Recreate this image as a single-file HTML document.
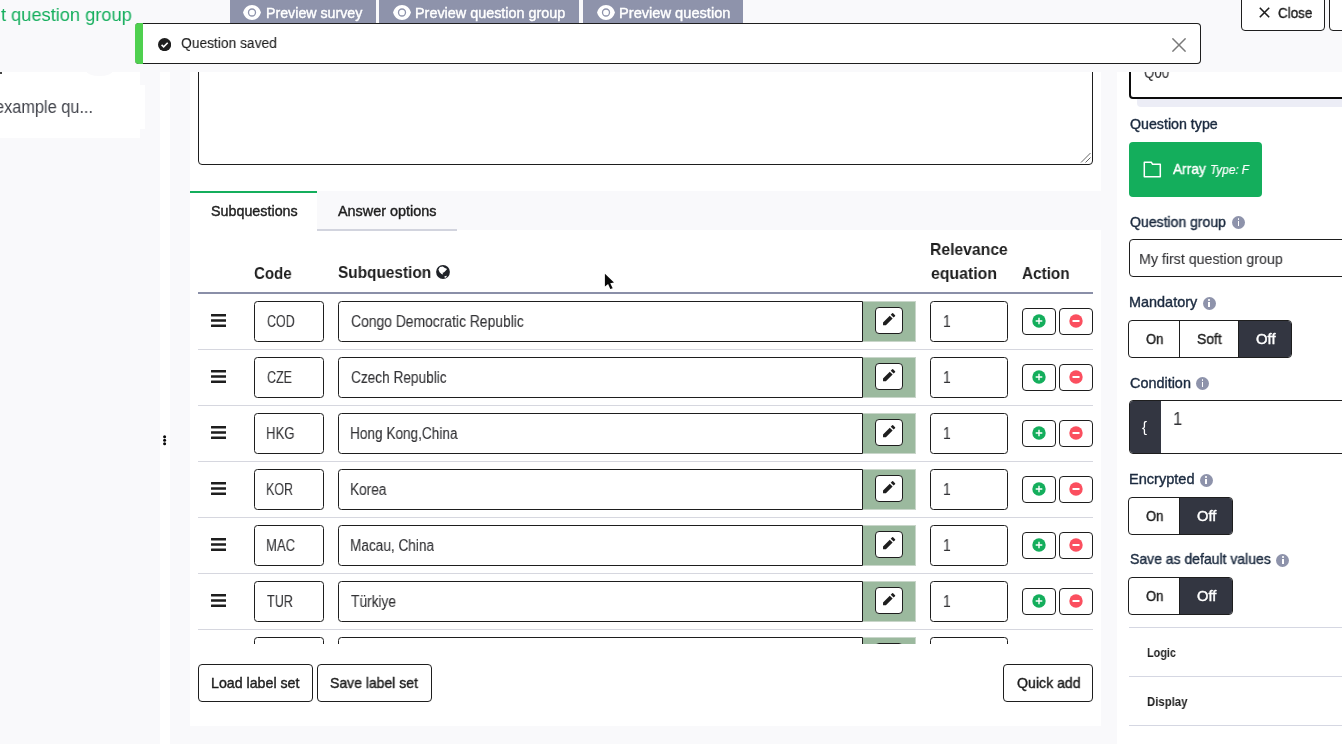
<!DOCTYPE html>
<html lang="en">
<head>
<meta charset="utf-8">
<title>Edit question</title>
<style>
*{box-sizing:border-box;margin:0;padding:0}
html,body{width:1342px;height:744px;overflow:hidden;background:#f9f9fb}
body{font-family:"Liberation Sans", sans-serif;color:#1e1e1e;position:relative;font-size:14px}
.abs{position:absolute}
.t{position:absolute;white-space:nowrap;line-height:1;transform-origin:0 0;will-change:transform}
.white{background:#fff}
.btn{position:absolute;background:#fff;border:1px solid #1e1e1e;border-radius:4px}
.inp{position:absolute;top:7px;background:#fff;border:1px solid #1e1e1e;border-radius:3.500px;height:41px}
.row{position:absolute;left:198px;width:895px;height:56px;border-bottom:1px solid #d6d7df}
.bars{position:absolute;left:12.700px;top:19.800px;width:15.600px;height:13px}
.addon{position:absolute;left:665px;top:7px;width:53px;height:41px;background:#9bb99e;border:1px solid #c9d6ca;border-left:0}
.pen{position:absolute;left:677px;top:13px;width:28px;height:27px;background:#fff;border:1px solid #1e1e1e;border-radius:4px}
.pen svg{position:absolute;left:4.900px;top:3.200px}
.act{position:absolute;top:14px;width:34px;height:27px;background:#fff;border:1px solid #1e1e1e;border-radius:4px}
.act svg{position:absolute;left:7.500px;top:4.100px}
.info{position:absolute;width:13px;height:13px;border-radius:50%;background:#8e93ab}
.info:before{content:"";position:absolute;left:5.700px;top:2.800px;width:1.600px;height:1.600px;background:#fff;border-radius:50%}
.info:after{content:"";position:absolute;left:5.700px;top:5.400px;width:1.600px;height:4.700px;background:#fff}
.bg{position:absolute;left:1128px;height:38px;border:1px solid #1e1e1e;border-radius:4px;background:#fff;overflow:hidden}
.bg b{position:absolute;top:0;bottom:0}
.bg b.on{background:#333641}
.bg b+b{border-left:1px solid #1e1e1e}
.hr{position:absolute;left:1129px;width:220px;height:1px;background:#d5d7e2}
</style>
</head>
<body>
<div class="abs white" style="left:0;top:72px;width:140px;height:65.700px"></div>
<div class="abs white" style="left:0;top:85px;width:145px;height:43.700px"></div>
<div class="abs white" style="left:160px;top:72px;width:10.400px;height:672px"></div>
<div class="abs" style="left:86px;top:65px;width:27px;height:11px;border-radius:50%;background:#f9f9fb"></div>
<div class="abs" style="left:0;top:72px;width:1.500px;height:2px;background:#444"></div>
<svg class="abs" style="left:160px;top:432px" width="10" height="16" viewBox="0 0 10 16"><circle cx="4.600" cy="4.800" r="1.500" fill="#0a0a0a"/><circle cx="4.600" cy="8.300" r="1.500" fill="#0a0a0a"/><circle cx="4.600" cy="11.800" r="1.500" fill="#0a0a0a"/></svg>
<div class="t" id="sb-item" style="left:-5.20px;top:98.69px;font-size:17.5px;color:#42444c;transform:scaleX(0.9328)">example qu...</div>
<div class="abs white" style="left:190px;top:72px;width:911px;height:119px"></div>
<div class="abs white" style="left:190px;top:230px;width:911px;height:495.700px"></div>
<div class="abs" style="left:198px;top:30px;width:895px;height:135px;border:1px solid #1e1e1e;border-radius:4px;background:#fff"></div>
<svg class="abs" style="left:1080px;top:152px" width="11" height="11" viewBox="0 0 11 11"><path d="M10.500 1L1 10.500M10.500 5.500L5.500 10.500" stroke="#666" stroke-width="1" fill="none"/></svg>
<div class="abs white" style="left:190px;top:190.600px;width:127.200px;height:40px;border-top:2.300px solid #14ae5c"></div>
<div class="abs" style="left:317.200px;top:229px;width:139.800px;height:2px;background:#d2d4de"></div>
<div class="t" id="tab1" style="left:210.50px;top:203.58px;font-size:14.2px;color:#1e1e1e;transform:scaleX(1.0083);-webkit-text-stroke:0.4px #1e1e1e">Subquestions</div>
<div class="t" id="tab2" style="left:338.20px;top:203.58px;font-size:14.2px;color:#1e1e1e;transform:scaleX(1.0154);-webkit-text-stroke:0.4px #1e1e1e">Answer options</div>
<div class="t" id="th-code" style="left:254.00px;top:265.55px;font-size:16.6px;color:#1e1e1e;transform:scaleX(0.9090);font-weight:700">Code</div>
<div class="t" id="th-sub" style="left:338.20px;top:264.95px;font-size:16.6px;color:#1e1e1e;transform:scaleX(0.9278);font-weight:700">Subquestion</div>
<svg class="abs" style="left:435.700px;top:265.100px" width="14" height="14" viewBox="0 0 14 14"><circle cx="7" cy="7" r="6.900" fill="#1f2228"/><path d="M2.400 4.600L3.900 2.100l2.900-.5 1.700 1.200 2.600 1.300-1.700 1.900-1.600 1.600-1.300.2.700 1.600-1.700-.3-1.900-1.900zM8.500 11.200l2.600-.5-1.300 2-1.300-.2z" fill="#fff"/></svg>
<div class="t" id="th-rel1" style="left:929.65px;top:241.95px;font-size:16.6px;color:#1e1e1e;transform:scaleX(0.9472);font-weight:700">Relevance</div>
<div class="t" id="th-rel2" style="left:930.60px;top:265.75px;font-size:16.6px;color:#1e1e1e;transform:scaleX(0.9550);font-weight:700">equation</div>
<div class="t" id="th-act" style="left:1022.30px;top:265.75px;font-size:16.6px;color:#1e1e1e;transform:scaleX(0.9226);font-weight:700">Action</div>
<div class="abs" style="left:198px;top:292px;width:895px;height:2px;background:#8a8fa8"></div>
<div class="abs" id="rows" style="left:0;top:294px;width:1342px;height:349.600px;overflow:hidden">
<div class="row" style="top:0px">
<svg class="bars" width="15.600" height="13" viewBox="0 0 15.600 13"><rect x="0" y="0" width="15.600" height="2.400" rx=".3" fill="#1e1e1e"/><rect x="0" y="5.300" width="15.600" height="2.400" rx=".3" fill="#1e1e1e"/><rect x="0" y="10.600" width="15.600" height="2.400" rx=".3" fill="#1e1e1e"/></svg>
<div class="inp" style="left:56px;width:70px"></div>
<div class="inp" style="left:140px;width:525px;border-radius:3.500px 0 0 3.500px"></div>
<div class="addon"></div><div class="pen"><svg width="16.300" height="16.300" viewBox="0 0 24 24"><path d="M12.900 6.858l4.242 4.243L7.242 21H3v-4.243l9.900-9.900zm1.414-1.414l2.121-2.122a1 1 0 0 1 1.414 0l2.829 2.829a1 1 0 0 1 0 1.414l-2.122 2.121-4.242-4.242z" fill="#1e1e1e"/></svg></div>
<div class="inp" style="left:732px;width:78px"></div>
<div class="act" style="left:824px"><svg width="16" height="16" viewBox="0 0 16 16"><circle cx="8" cy="8" r="6.700" fill="#14ae5c"/><path d="M8 4.700v6.600M4.700 8h6.600" stroke="#fff" stroke-width="1.400" fill="none"/></svg></div><div class="act" style="left:861px"><svg width="16" height="16" viewBox="0 0 16 16"><circle cx="8" cy="8" r="6.700" fill="#fb4f5f"/><path d="M4.500 8h7" stroke="#fff" stroke-width="2" fill="none"/></svg></div>
</div>
<div class="t" id="c0" style="left:267.00px;top:19.63px;font-size:15.8px;color:#333336;transform:scaleX(0.7868);-webkit-text-stroke:0.1px #333336">COD</div>
<div class="t" id="n0" style="left:350.80px;top:19.63px;font-size:15.8px;color:#333336;transform:scaleX(0.8787);-webkit-text-stroke:0.1px #333336">Congo Democratic Republic</div>
<div class="t" id="r0" style="left:942.92px;top:19.63px;font-size:15.8px;color:#333336;transform:scaleX(0.8750);-webkit-text-stroke:0.1px #333336">1</div>
<div class="row" style="top:56px">
<svg class="bars" width="15.600" height="13" viewBox="0 0 15.600 13"><rect x="0" y="0" width="15.600" height="2.400" rx=".3" fill="#1e1e1e"/><rect x="0" y="5.300" width="15.600" height="2.400" rx=".3" fill="#1e1e1e"/><rect x="0" y="10.600" width="15.600" height="2.400" rx=".3" fill="#1e1e1e"/></svg>
<div class="inp" style="left:56px;width:70px"></div>
<div class="inp" style="left:140px;width:525px;border-radius:3.500px 0 0 3.500px"></div>
<div class="addon"></div><div class="pen"><svg width="16.300" height="16.300" viewBox="0 0 24 24"><path d="M12.900 6.858l4.242 4.243L7.242 21H3v-4.243l9.900-9.900zm1.414-1.414l2.121-2.122a1 1 0 0 1 1.414 0l2.829 2.829a1 1 0 0 1 0 1.414l-2.122 2.121-4.242-4.242z" fill="#1e1e1e"/></svg></div>
<div class="inp" style="left:732px;width:78px"></div>
<div class="act" style="left:824px"><svg width="16" height="16" viewBox="0 0 16 16"><circle cx="8" cy="8" r="6.700" fill="#14ae5c"/><path d="M8 4.700v6.600M4.700 8h6.600" stroke="#fff" stroke-width="1.400" fill="none"/></svg></div><div class="act" style="left:861px"><svg width="16" height="16" viewBox="0 0 16 16"><circle cx="8" cy="8" r="6.700" fill="#fb4f5f"/><path d="M4.500 8h7" stroke="#fff" stroke-width="2" fill="none"/></svg></div>
</div>
<div class="t" id="c1" style="left:267.00px;top:75.63px;font-size:15.8px;color:#333336;transform:scaleX(0.7889);-webkit-text-stroke:0.1px #333336">CZE</div>
<div class="t" id="n1" style="left:350.80px;top:75.63px;font-size:15.8px;color:#333336;transform:scaleX(0.8642);-webkit-text-stroke:0.1px #333336">Czech Republic</div>
<div class="t" id="r1" style="left:942.92px;top:75.63px;font-size:15.8px;color:#333336;transform:scaleX(0.8750);-webkit-text-stroke:0.1px #333336">1</div>
<div class="row" style="top:112px">
<svg class="bars" width="15.600" height="13" viewBox="0 0 15.600 13"><rect x="0" y="0" width="15.600" height="2.400" rx=".3" fill="#1e1e1e"/><rect x="0" y="5.300" width="15.600" height="2.400" rx=".3" fill="#1e1e1e"/><rect x="0" y="10.600" width="15.600" height="2.400" rx=".3" fill="#1e1e1e"/></svg>
<div class="inp" style="left:56px;width:70px"></div>
<div class="inp" style="left:140px;width:525px;border-radius:3.500px 0 0 3.500px"></div>
<div class="addon"></div><div class="pen"><svg width="16.300" height="16.300" viewBox="0 0 24 24"><path d="M12.900 6.858l4.242 4.243L7.242 21H3v-4.243l9.900-9.900zm1.414-1.414l2.121-2.122a1 1 0 0 1 1.414 0l2.829 2.829a1 1 0 0 1 0 1.414l-2.122 2.121-4.242-4.242z" fill="#1e1e1e"/></svg></div>
<div class="inp" style="left:732px;width:78px"></div>
<div class="act" style="left:824px"><svg width="16" height="16" viewBox="0 0 16 16"><circle cx="8" cy="8" r="6.700" fill="#14ae5c"/><path d="M8 4.700v6.600M4.700 8h6.600" stroke="#fff" stroke-width="1.400" fill="none"/></svg></div><div class="act" style="left:861px"><svg width="16" height="16" viewBox="0 0 16 16"><circle cx="8" cy="8" r="6.700" fill="#fb4f5f"/><path d="M4.500 8h7" stroke="#fff" stroke-width="2" fill="none"/></svg></div>
</div>
<div class="t" id="c2" style="left:266.17px;top:131.63px;font-size:15.8px;color:#333336;transform:scaleX(0.8317);-webkit-text-stroke:0.1px #333336">HKG</div>
<div class="t" id="n2" style="left:349.94px;top:131.63px;font-size:15.8px;color:#333336;transform:scaleX(0.8618);-webkit-text-stroke:0.1px #333336">Hong Kong,China</div>
<div class="t" id="r2" style="left:942.92px;top:131.63px;font-size:15.8px;color:#333336;transform:scaleX(0.8750);-webkit-text-stroke:0.1px #333336">1</div>
<div class="row" style="top:168px">
<svg class="bars" width="15.600" height="13" viewBox="0 0 15.600 13"><rect x="0" y="0" width="15.600" height="2.400" rx=".3" fill="#1e1e1e"/><rect x="0" y="5.300" width="15.600" height="2.400" rx=".3" fill="#1e1e1e"/><rect x="0" y="10.600" width="15.600" height="2.400" rx=".3" fill="#1e1e1e"/></svg>
<div class="inp" style="left:56px;width:70px"></div>
<div class="inp" style="left:140px;width:525px;border-radius:3.500px 0 0 3.500px"></div>
<div class="addon"></div><div class="pen"><svg width="16.300" height="16.300" viewBox="0 0 24 24"><path d="M12.900 6.858l4.242 4.243L7.242 21H3v-4.243l9.900-9.900zm1.414-1.414l2.121-2.122a1 1 0 0 1 1.414 0l2.829 2.829a1 1 0 0 1 0 1.414l-2.122 2.121-4.242-4.242z" fill="#1e1e1e"/></svg></div>
<div class="inp" style="left:732px;width:78px"></div>
<div class="act" style="left:824px"><svg width="16" height="16" viewBox="0 0 16 16"><circle cx="8" cy="8" r="6.700" fill="#14ae5c"/><path d="M8 4.700v6.600M4.700 8h6.600" stroke="#fff" stroke-width="1.400" fill="none"/></svg></div><div class="act" style="left:861px"><svg width="16" height="16" viewBox="0 0 16 16"><circle cx="8" cy="8" r="6.700" fill="#fb4f5f"/><path d="M4.500 8h7" stroke="#fff" stroke-width="2" fill="none"/></svg></div>
</div>
<div class="t" id="c3" style="left:266.21px;top:187.63px;font-size:15.8px;color:#333336;transform:scaleX(0.7921);-webkit-text-stroke:0.1px #333336">KOR</div>
<div class="t" id="n3" style="left:349.93px;top:187.63px;font-size:15.8px;color:#333336;transform:scaleX(0.8654);-webkit-text-stroke:0.1px #333336">Korea</div>
<div class="t" id="r3" style="left:942.92px;top:187.63px;font-size:15.8px;color:#333336;transform:scaleX(0.8750);-webkit-text-stroke:0.1px #333336">1</div>
<div class="row" style="top:224px">
<svg class="bars" width="15.600" height="13" viewBox="0 0 15.600 13"><rect x="0" y="0" width="15.600" height="2.400" rx=".3" fill="#1e1e1e"/><rect x="0" y="5.300" width="15.600" height="2.400" rx=".3" fill="#1e1e1e"/><rect x="0" y="10.600" width="15.600" height="2.400" rx=".3" fill="#1e1e1e"/></svg>
<div class="inp" style="left:56px;width:70px"></div>
<div class="inp" style="left:140px;width:525px;border-radius:3.500px 0 0 3.500px"></div>
<div class="addon"></div><div class="pen"><svg width="16.300" height="16.300" viewBox="0 0 24 24"><path d="M12.900 6.858l4.242 4.243L7.242 21H3v-4.243l9.900-9.900zm1.414-1.414l2.121-2.122a1 1 0 0 1 1.414 0l2.829 2.829a1 1 0 0 1 0 1.414l-2.122 2.121-4.242-4.242z" fill="#1e1e1e"/></svg></div>
<div class="inp" style="left:732px;width:78px"></div>
<div class="act" style="left:824px"><svg width="16" height="16" viewBox="0 0 16 16"><circle cx="8" cy="8" r="6.700" fill="#14ae5c"/><path d="M8 4.700v6.600M4.700 8h6.600" stroke="#fff" stroke-width="1.400" fill="none"/></svg></div><div class="act" style="left:861px"><svg width="16" height="16" viewBox="0 0 16 16"><circle cx="8" cy="8" r="6.700" fill="#fb4f5f"/><path d="M4.500 8h7" stroke="#fff" stroke-width="2" fill="none"/></svg></div>
</div>
<div class="t" id="c4" style="left:266.17px;top:243.63px;font-size:15.8px;color:#333336;transform:scaleX(0.8280);-webkit-text-stroke:0.1px #333336">MAC</div>
<div class="t" id="n4" style="left:349.94px;top:243.63px;font-size:15.8px;color:#333336;transform:scaleX(0.8616);-webkit-text-stroke:0.1px #333336">Macau, China</div>
<div class="t" id="r4" style="left:942.92px;top:243.63px;font-size:15.8px;color:#333336;transform:scaleX(0.8750);-webkit-text-stroke:0.1px #333336">1</div>
<div class="row" style="top:280px">
<svg class="bars" width="15.600" height="13" viewBox="0 0 15.600 13"><rect x="0" y="0" width="15.600" height="2.400" rx=".3" fill="#1e1e1e"/><rect x="0" y="5.300" width="15.600" height="2.400" rx=".3" fill="#1e1e1e"/><rect x="0" y="10.600" width="15.600" height="2.400" rx=".3" fill="#1e1e1e"/></svg>
<div class="inp" style="left:56px;width:70px"></div>
<div class="inp" style="left:140px;width:525px;border-radius:3.500px 0 0 3.500px"></div>
<div class="addon"></div><div class="pen"><svg width="16.300" height="16.300" viewBox="0 0 24 24"><path d="M12.900 6.858l4.242 4.243L7.242 21H3v-4.243l9.900-9.900zm1.414-1.414l2.121-2.122a1 1 0 0 1 1.414 0l2.829 2.829a1 1 0 0 1 0 1.414l-2.122 2.121-4.242-4.242z" fill="#1e1e1e"/></svg></div>
<div class="inp" style="left:732px;width:78px"></div>
<div class="act" style="left:824px"><svg width="16" height="16" viewBox="0 0 16 16"><circle cx="8" cy="8" r="6.700" fill="#14ae5c"/><path d="M8 4.700v6.600M4.700 8h6.600" stroke="#fff" stroke-width="1.400" fill="none"/></svg></div><div class="act" style="left:861px"><svg width="16" height="16" viewBox="0 0 16 16"><circle cx="8" cy="8" r="6.700" fill="#fb4f5f"/><path d="M4.500 8h7" stroke="#fff" stroke-width="2" fill="none"/></svg></div>
</div>
<div class="t" id="c5" style="left:267.00px;top:299.63px;font-size:15.8px;color:#333336;transform:scaleX(0.7986);-webkit-text-stroke:0.1px #333336">TUR</div>
<div class="t" id="n5" style="left:350.80px;top:299.63px;font-size:15.8px;color:#333336;transform:scaleX(0.8692);-webkit-text-stroke:0.1px #333336">Türkiye</div>
<div class="t" id="r5" style="left:942.92px;top:299.63px;font-size:15.8px;color:#333336;transform:scaleX(0.8750);-webkit-text-stroke:0.1px #333336">1</div>
<div class="row" style="top:336px">
<svg class="bars" width="15.600" height="13" viewBox="0 0 15.600 13"><rect x="0" y="0" width="15.600" height="2.400" rx=".3" fill="#1e1e1e"/><rect x="0" y="5.300" width="15.600" height="2.400" rx=".3" fill="#1e1e1e"/><rect x="0" y="10.600" width="15.600" height="2.400" rx=".3" fill="#1e1e1e"/></svg>
<div class="inp" style="left:56px;width:70px"></div>
<div class="inp" style="left:140px;width:525px;border-radius:3.500px 0 0 3.500px"></div>
<div class="addon"></div><div class="pen"><svg width="16.300" height="16.300" viewBox="0 0 24 24"><path d="M12.900 6.858l4.242 4.243L7.242 21H3v-4.243l9.900-9.900zm1.414-1.414l2.121-2.122a1 1 0 0 1 1.414 0l2.829 2.829a1 1 0 0 1 0 1.414l-2.122 2.121-4.242-4.242z" fill="#1e1e1e"/></svg></div>
<div class="inp" style="left:732px;width:78px"></div>
<div class="act" style="left:824px"><svg width="16" height="16" viewBox="0 0 16 16"><circle cx="8" cy="8" r="6.700" fill="#14ae5c"/><path d="M8 4.700v6.600M4.700 8h6.600" stroke="#fff" stroke-width="1.400" fill="none"/></svg></div><div class="act" style="left:861px"><svg width="16" height="16" viewBox="0 0 16 16"><circle cx="8" cy="8" r="6.700" fill="#fb4f5f"/><path d="M4.500 8h7" stroke="#fff" stroke-width="2" fill="none"/></svg></div>
</div>
</div>
<div class="btn" style="left:198px;top:664px;width:115px;height:38px"></div>
<div class="btn" style="left:317px;top:664px;width:115px;height:38px"></div>
<div class="btn" style="left:1003px;top:664px;width:90px;height:38px"></div>
<div class="t" id="b-load" style="left:211.00px;top:676.08px;font-size:14.2px;color:#1e1e1e;transform:scaleX(1.0011);-webkit-text-stroke:0.4px #1e1e1e">Load label set</div>
<div class="t" id="b-save" style="left:330.30px;top:676.08px;font-size:14.2px;color:#1e1e1e;transform:scaleX(0.9856);-webkit-text-stroke:0.4px #1e1e1e">Save label set</div>
<div class="t" id="b-quick" style="left:1016.90px;top:675.88px;font-size:14.2px;color:#1e1e1e;transform:scaleX(0.9954);-webkit-text-stroke:0.4px #1e1e1e">Quick add</div>
<div class="abs white" style="left:1117px;top:72px;width:225px;height:672px"></div>
<div class="abs" style="left:1137px;top:90px;width:210px;height:17px;background:#ecedf6;border-radius:4px"></div>
<div class="abs" style="left:1129px;top:30px;width:230px;height:69px;border:2px solid #0c0c0c;border-radius:4px;background:#fff"></div>
<div class="t" id="q00" style="left:1144.00px;top:65.13px;font-size:15.8px;color:#333336;transform:scaleX(0.8446);-webkit-text-stroke:0.1px #333336">Q00</div>
<div class="t" id="l-qt" style="left:1130.30px;top:117.08px;font-size:14.2px;color:#1b2a3f;transform:scaleX(1.0017);-webkit-text-stroke:0.38px #1b2a3f">Question type</div>
<div class="abs" style="left:1129px;top:142px;width:133px;height:55px;border-radius:4px;background:#14ae5c"></div>
<svg class="abs" style="left:1143px;top:161px" width="19" height="17" viewBox="0 0 19 17"><path d="M1.300 1.200h7l1.300 2.100h7.700v12.400h-16z" fill="none" stroke="#fff" stroke-width="1.500" stroke-linejoin="round"/></svg>
<div class="t" id="arr" style="left:1172.90px;top:161.71px;font-size:14.4px;color:#fff;transform:scaleX(0.9521);-webkit-text-stroke:0.4px #fff">Array</div>
<div class="t" id="typf" style="left:1209.78px;top:163.76px;font-size:12.8px;color:#fff;transform:scaleX(0.9200);font-style:italic;-webkit-text-stroke:0.2px #fff">Type: F</div>
<div class="t" id="l-qg" style="left:1130.30px;top:214.98px;font-size:14.2px;color:#1b2a3f;transform:scaleX(0.9895);-webkit-text-stroke:0.38px #1b2a3f">Question group</div>
<div class="info" style="left:1232.2px;top:215.7px"></div>
<div class="abs" style="left:1129px;top:239px;width:230px;height:38px;border:1px solid #1e1e1e;border-radius:4px;background:#fff"></div>
<div class="t" id="sel" style="left:1139.26px;top:251.33px;font-size:15.2px;color:#333336;transform:scaleX(0.9357);-webkit-text-stroke:0.1px #333336">My first question group</div>
<div class="t" id="l-man" style="left:1129.28px;top:294.98px;font-size:14.2px;color:#1b2a3f;transform:scaleX(1.0174);-webkit-text-stroke:0.38px #1b2a3f">Mandatory</div>
<div class="info" style="left:1202.8px;top:296.7px"></div>
<div class="bg" style="top:320px;width:164px"><b style="left:0;width:51px"></b><b style="left:50px;width:60px"></b><b class="on" style="left:109px;width:54px"></b></div>
<div class="t" id="m-on" style="left:1146.10px;top:331.78px;font-size:14.2px;color:#1e1e1e;transform:scaleX(0.9204);-webkit-text-stroke:0.4px #1e1e1e">On</div>
<div class="t" id="m-soft" style="left:1196.90px;top:331.78px;font-size:14.2px;color:#1e1e1e;transform:scaleX(0.9804);-webkit-text-stroke:0.4px #1e1e1e">Soft</div>
<div class="t" id="m-off" style="left:1255.60px;top:331.78px;font-size:14.2px;color:#fff;transform:scaleX(1.0470);-webkit-text-stroke:0.4px #fff">Off</div>
<div class="t" id="l-con" style="left:1130.30px;top:375.78px;font-size:14.2px;color:#1b2a3f;transform:scaleX(1.0160);-webkit-text-stroke:0.38px #1b2a3f">Condition</div>
<div class="info" style="left:1195.9px;top:376.7px"></div>
<div class="abs" style="left:1129px;top:400px;width:230px;height:54px;border:1px solid #1e1e1e;border-radius:4px;background:#fff;overflow:hidden"><div class="abs" style="left:0;top:0;width:31px;height:54px;background:#333641"></div></div>
<div class="t" id="brace" style="left:1142.30px;top:419.10px;font-size:15px;color:#fff;transform:scaleX(1.0000)">{</div>
<div class="t" id="con1" style="left:1172.58px;top:409.66px;font-size:18px;color:#333336;transform:scaleX(0.9222);font-family:"Liberation Mono", monospace">1</div>
<div class="t" id="l-enc" style="left:1129.27px;top:471.68px;font-size:14.2px;color:#1b2a3f;transform:scaleX(1.0260);-webkit-text-stroke:0.38px #1b2a3f">Encrypted</div>
<div class="info" style="left:1199.7px;top:473.5px"></div>
<div class="bg" style="top:497px;width:105px"><b style="left:0;width:51px"></b><b class="on" style="left:50px;width:54px"></b></div>
<div class="t" id="e-on" style="left:1146.10px;top:508.78px;font-size:14.2px;color:#1e1e1e;transform:scaleX(0.9204);-webkit-text-stroke:0.4px #1e1e1e">On</div>
<div class="t" id="e-off" style="left:1196.60px;top:508.78px;font-size:14.2px;color:#fff;transform:scaleX(1.0363);-webkit-text-stroke:0.4px #fff">Off</div>
<div class="t" id="l-sav" style="left:1130.30px;top:552.48px;font-size:14.2px;color:#1b2a3f;transform:scaleX(0.9863);-webkit-text-stroke:0.38px #1b2a3f">Save as default values</div>
<div class="info" style="left:1276.3px;top:553.7px"></div>
<div class="bg" style="top:577px;width:105px"><b style="left:0;width:51px"></b><b class="on" style="left:50px;width:54px"></b></div>
<div class="t" id="s-on" style="left:1146.10px;top:588.78px;font-size:14.2px;color:#1e1e1e;transform:scaleX(0.9204);-webkit-text-stroke:0.4px #1e1e1e">On</div>
<div class="t" id="s-off" style="left:1196.60px;top:588.78px;font-size:14.2px;color:#fff;transform:scaleX(1.0363);-webkit-text-stroke:0.4px #fff">Off</div>
<div class="hr" style="top:627px"></div><div class="hr" style="top:676px"></div><div class="hr" style="top:725px"></div>
<div class="t" id="a-log" style="left:1146.60px;top:646.96px;font-size:12.8px;color:#1e1e1e;transform:scaleX(0.8469);font-weight:700">Logic</div>
<div class="t" id="a-dis" style="left:1146.60px;top:696.06px;font-size:12.8px;color:#1e1e1e;transform:scaleX(0.8879);font-weight:700">Display</div>
<div class="abs" style="left:0;top:0;width:1342px;height:72px;background:#f9f9fb"></div>
<div class="t" id="sb-title" style="left:1.10px;top:4.62px;font-size:19px;color:#14ae5c;transform:scaleX(0.9595)">t question group</div>
<div class="abs" style="left:230.2px;top:0;width:145.7px;height:22.800px;background:#8e93ab"></div>
<div class="abs" style="left:379px;top:0;width:199.8px;height:22.800px;background:#8e93ab"></div>
<div class="abs" style="left:583.2px;top:0;width:159.6px;height:22.800px;background:#8e93ab"></div>
<svg class="abs" style="left:243.1px;top:4.5px" width="18" height="15" viewBox="0 0 18 15"><path d="M.1 7.500C1.100 3.100 4.700 0 9 0s7.900 3.100 8.900 7.500C16.900 11.900 13.300 15 9 15S1.100 11.900.1 7.500z" fill="#fff"/><circle cx="9" cy="7.500" r="3.500" fill="none" stroke="#8e93ab" stroke-width="1.300"/></svg>
<svg class="abs" style="left:393px;top:4.5px" width="18" height="15" viewBox="0 0 18 15"><path d="M.1 7.500C1.100 3.100 4.700 0 9 0s7.900 3.100 8.900 7.500C16.900 11.900 13.300 15 9 15S1.100 11.900.1 7.500z" fill="#fff"/><circle cx="9" cy="7.500" r="3.500" fill="none" stroke="#8e93ab" stroke-width="1.300"/></svg>
<svg class="abs" style="left:596.9px;top:4.5px" width="18" height="15" viewBox="0 0 18 15"><path d="M.1 7.500C1.100 3.100 4.700 0 9 0s7.900 3.100 8.900 7.500C16.900 11.900 13.300 15 9 15S1.100 11.900.1 7.500z" fill="#fff"/><circle cx="9" cy="7.500" r="3.500" fill="none" stroke="#8e93ab" stroke-width="1.300"/></svg>
<div class="t" id="pv1" style="left:265.90px;top:5.88px;font-size:14.2px;color:#fff;transform:scaleX(1.0021);-webkit-text-stroke:0.4px #fff">Preview survey</div>
<div class="t" id="pv2" style="left:415.29px;top:5.88px;font-size:14.2px;color:#fff;transform:scaleX(1.0137);-webkit-text-stroke:0.4px #fff">Preview question group</div>
<div class="t" id="pv3" style="left:618.57px;top:5.88px;font-size:14.2px;color:#fff;transform:scaleX(1.0316);-webkit-text-stroke:0.4px #fff">Preview question</div>
<div class="btn" style="left:1241.400px;top:-8px;width:83.600px;height:38.600px"></div>
<div class="btn" style="left:1329px;top:-8px;width:40px;height:38.600px"></div>
<svg class="abs" style="left:1258.500px;top:7.200px" width="11" height="11" viewBox="0 0 11 11"><path d="M.8.8l9.400 9.400M10.200.8L.8 10.200" stroke="#1e1e1e" stroke-width="1.600" fill="none"/></svg>
<div class="t" id="b-close" style="left:1277.60px;top:5.58px;font-size:14.2px;color:#1e1e1e;transform:scaleX(0.9428);-webkit-text-stroke:0.4px #1e1e1e">Close</div>
<div class="abs" style="left:135px;top:23px;width:1066px;height:41px;background:#fff;border:1px solid #1e1e1e;border-left:0;border-radius:4px"></div>
<div class="abs" style="left:135px;top:23px;width:8px;height:41px;background:#4fd04f;border-radius:4px 0 0 4px"></div>
<svg class="abs" style="left:157.800px;top:37.600px" width="13.200" height="13.200" viewBox="0 0 14 14"><circle cx="7" cy="7" r="7" fill="#1e1e1e"/><path d="M3.800 7.300l2.200 2.100 4.300-4.400" stroke="#fff" stroke-width="1.700" fill="none"/></svg>
<svg class="abs" style="left:1172px;top:37.900px" width="14" height="14" viewBox="0 0 14 14"><path d="M.4.4l13.200 13.200M13.600.4L.4 13.600" stroke="#7a7a7a" stroke-width="1.500" fill="none"/></svg>
<div class="t" id="al-txt" style="left:181.10px;top:35.25px;font-size:15.3px;color:#1e1e1e;transform:scaleX(0.9018);-webkit-text-stroke:0.1px #1e1e1e">Question saved</div>
<svg class="abs" style="left:600px;top:268px" width="20" height="26" viewBox="0 0 20 26"><path d="M4.900 5.800V18.600L8.100 16.100l2.200 5 2.400-.9-2.500-5 3.800-.7z" fill="#0a0a0a" stroke="#fff" stroke-width="1.700" stroke-linejoin="round" paint-order="stroke"/></svg>
</body>
</html>
